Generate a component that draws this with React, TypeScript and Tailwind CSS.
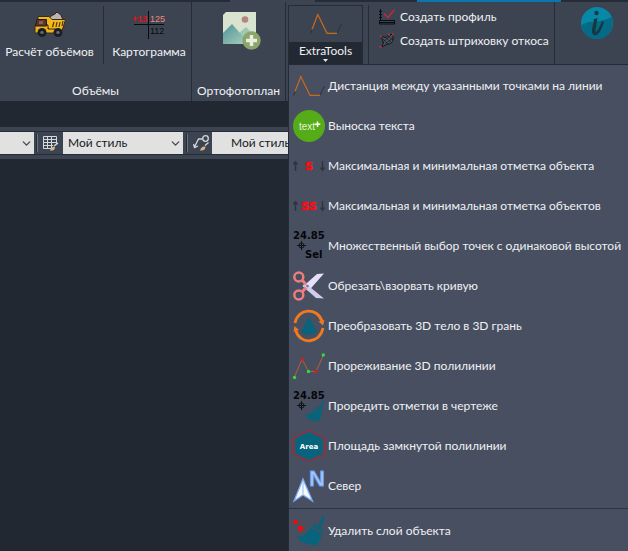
import React from "react";
import { ChevronDown } from "lucide-react";

interface MenuItem {
  label: string;
  icon: React.ReactNode;
}

function Icon({ children }: { children: React.ReactNode }) {
  return (
    <svg width="32" height="32" viewBox="0 0 32 32" fill="none" className="shrink-0 overflow-visible" aria-hidden="true">
      {children}
    </svg>
  );
}

function DistanceShape() {
  return (
    <>
      <path d="M0.5 25.5 L2.5 21 M27 25 L31.5 16" stroke="#2b3039" strokeWidth="1" />
      <path d="M2 21.5 L7.8 6.5 L17 25.3 H27" stroke="#c9681f" strokeWidth="1.2" />
    </>
  );
}

function Elevation() {
  return (
    <>
      <text x="0" y="9" fontSize="10" fontWeight="bold" fontFamily="DejaVu Sans, sans-serif" fill="#050608">
        24.85
      </text>
      <circle cx="8.5" cy="15.5" r="2.5" stroke="#111318" />
      <path d="M8.5 11 V20 M4 15.5 H13" stroke="#111318" />
    </>
  );
}

function Broom() {
  return (
    <>
      <path d="M29.5 1 L32 2.2 L28 12 L25 10.5 Z" fill="#08647d" />
      <path d="M20.5 9 L30 13.5 L29 16.5 L18.8 11.5 Z" fill="#08647d" />
      <path d="M17.5 12.800 L28.3 18 C28.5 23 26.5 28 22 31 L20.5 28.5 L19.5 31 L15.5 28 L13 29.5 L10.5 26.5 L8 27.5 L4.5 21 C10 22 14.5 19 17.5 12.8 Z" fill="#08647d" />
    </>
  );
}

function ExtremeArrows() {
  return (
    <>
      <path d="M2.5 21 V12 M0.5 14.5 L2.5 11.8 L4.5 14.5" stroke="#2f343d" strokeWidth="1.4" />
      <path d="M29.5 11 V20 M27.5 17.5 L29.5 20.2 L31.5 17.5" stroke="#2f343d" strokeWidth="1.4" />
    </>
  );
}

const items: MenuItem[] = [
  { label: "Дистанция между указанными точками на линии", icon: <Icon><DistanceShape /></Icon> },
  {
    label: "Выноска текста",
    icon: (
      <Icon>
        <circle cx="16" cy="16" r="16" fill="#55ab18" />
        <text x="6" y="20" fontSize="10" fontFamily="Liberation Sans, sans-serif" fill="#e4f6d5">text</text>
        <path d="M24.5 11.5 V17 M21.8 14.3 H27.3" stroke="#fff" strokeWidth="1.5" />
      </Icon>
    ),
  },
  {
    label: "Максимальная и минимальная отметка объекта",
    icon: (
      <Icon>
        <ExtremeArrows />
        <text x="16" y="20" fontSize="11" fontWeight="bold" fontFamily="DejaVu Sans, sans-serif" fill="#ff0a10" stroke="#ff0a10" strokeWidth="0.5" textAnchor="middle">S</text>
      </Icon>
    ),
  },
  {
    label: "Максимальная и минимальная отметка объектов",
    icon: (
      <Icon>
        <ExtremeArrows />
        <text x="16" y="20" fontSize="11" fontWeight="bold" fontFamily="DejaVu Sans, sans-serif" fill="#ff0a10" stroke="#ff0a10" strokeWidth="0.5" textAnchor="middle">SS</text>
      </Icon>
    ),
  },
  {
    label: "Множественный выбор точек с одинаковой высотой",
    icon: (
      <Icon>
        <Elevation />
        <text x="12" y="28" fontSize="10" fontWeight="bold" fontFamily="DejaVu Sans, sans-serif" fill="#050608">Sel</text>
      </Icon>
    ),
  },
  {
    label: "Обрезать\\взорвать кривую",
    icon: (
      <Icon>
        <path d="M31 3.5 L24 4 L10 16.5 L15.5 21 Z" fill="#e6e0fa" />
        <path d="M12 13 L31 28.5 L23 28 L9.5 16 Z" fill="#d3caef" />
        <path d="M9 10 L13 14.5 M9 22 L13 17.5" stroke="#ef7d7c" strokeWidth="3" />
        <circle cx="5.8" cy="7" r="4.5" stroke="#ef7d7c" strokeWidth="2.5" />
        <circle cx="5.8" cy="25" r="4.5" stroke="#ef7d7c" strokeWidth="2.5" />
        <circle cx="14.5" cy="16" r="1.3" fill="#7472a8" />
      </Icon>
    ),
  },
  {
    label: "Преобразовать 3D тело в 3D грань",
    icon: (
      <Icon>
        <path d="M16 7 L23.5 21 C22 26 10 26 8.5 21 Z" fill="#08647d" />
        <path d="M2 13 C5 -2 24 -3 29 11" stroke="#f07a1d" strokeWidth="2.8" />
        <path d="M30 18 C27 34 7 35 3 21" stroke="#f07a1d" strokeWidth="2.8" />
        <path d="M25.5 11.5 L31.5 10 L30 15.5 Z M0.5 22 L1.5 16 L6 20 Z" fill="#f07a1d" />
      </Icon>
    ),
  },
  {
    label: "Прореживание 3D полилинии",
    icon: (
      <Icon>
        <path d="M1.5 27 L9 9 L15.5 21.5 H23 L30.5 5" stroke="#b75e33" />
        <circle cx="1.5" cy="27.5" r="1.7" fill="#2fdc3d" />
        <circle cx="15.5" cy="21.5" r="1.7" fill="#2fdc3d" />
        <circle cx="30.3" cy="5" r="1.7" fill="#2fdc3d" />
        <circle cx="9" cy="9" r="1.7" fill="#d01f26" />
        <circle cx="23" cy="21.5" r="1.7" fill="#d01f26" />
      </Icon>
    ),
  },
  {
    label: "Проредить отметки в чертеже",
    icon: (
      <Icon>
        <Elevation />
        <g transform="translate(9 10) scale(0.7)"><Broom /></g>
      </Icon>
    ),
  },
  {
    label: "Площадь замкнутой полилинии",
    icon: (
      <Icon>
        <path d="M16 0.7 L31.5 8 V24 L16 31.3 L0.5 24 V8 Z" stroke="#b91f2b" />
        <path d="M16 2 L29.5 8.5 V23.5 L16 30 L2.5 23.5 V8.5 Z" fill="#08647d" />
        <text x="16" y="19" fontSize="7" fontWeight="bold" fontFamily="DejaVu Sans, sans-serif" fill="#fff" textAnchor="middle">Area</text>
      </Icon>
    ),
  },
  {
    label: "Север",
    icon: (
      <Icon>
        <path d="M10 9 L19.5 31 L10 25 L1 31 Z" fill="#f4f8ff" stroke="#7daaf0" strokeWidth="1.3" />
        <path d="M10 12 V24" stroke="#9dbcf0" />
        <text x="16" y="16" fontSize="22" fontWeight="bold" fontFamily="Liberation Sans, sans-serif" fill="#a5c6fa" stroke="#6f9ff0" strokeWidth="0.8">N</text>
      </Icon>
    ),
  },
];

const removeLayer: MenuItem = {
  label: "Удалить слой объекта",
  icon: (
    <Icon>
      <Broom />
      <circle cx="2.5" cy="7" r="2.3" fill="#f20a0a" />
      <circle cx="7.5" cy="13.5" r="2.7" fill="#f20a0a" />
      <circle cx="8.5" cy="7.5" r="0.9" fill="#b82027" />
    </Icon>
  ),
};

function MenuRow({ label, icon }: MenuItem) {
  return (
    <button role="menuitem" className="flex h-10 w-full items-center gap-[3px] pl-1 text-left whitespace-nowrap hover:bg-[#525c6f]">
      {icon}
      <span>{label}</span>
    </button>
  );
}

function ToolsMenu() {
  return (
    <div role="menu" className="absolute inset-x-0 top-16 z-10 border-t border-l border-[#252c37] bg-[#474f61] pt-px">
      {items.map((item) => (
        <MenuRow key={item.label} {...item} />
      ))}
      <hr className="my-[2px] border-[#2c333f]" />
      <MenuRow {...removeLayer} />
    </div>
  );
}

function TruckIcon() {
  return (
    <Icon>
      <path d="M14 10 L17 6 L21 4 L23 2 L27 5 L29 10 Z" fill="#bdb4af" stroke="#33251c" />
      <path d="M4 6.5 H15 L18 9.5 L31.5 9.5 L28 21 H15 L12 12 H4 Z" fill="#f2b91d" stroke="#3a2a14" />
      <path d="M20 12 L18.5 17 M23 12 L22 17 M26 12 L25 17 M29 11 L28 16" stroke="#473213" strokeWidth="1.2" />
      <path d="M1 15 H14 V19 H22 V23 H1 Z" fill="#eeb21c" stroke="#3a2a14" />
      <path d="M3 9.5 H12.5 V16 H1.5 Z" fill="#593530" stroke="#261a18" />
      <path d="M5 11 H9 V14 H5 Z" fill="#8c5b54" />
      <circle cx="8" cy="22.5" r="4.5" fill="#1c1f25" />
      <circle cx="8" cy="22.5" r="2.3" fill="#5f6872" stroke="#111318" />
      <circle cx="24" cy="22.5" r="4.5" fill="#1c1f25" />
      <circle cx="24" cy="22.5" r="2.3" fill="#5f6872" stroke="#111318" />
    </Icon>
  );
}

function CartogramIcon() {
  return (
    <Icon>
      <path d="M15.5 1 V29 M1 14.5 H31" stroke="#090b0e" />
      <g fontSize="9" fontFamily="Liberation Sans, sans-serif">
        <text x="-1" y="12" fill="#e01219" fontWeight="bold">+13</text>
        <text x="17" y="12" fill="#ee8879">125</text>
        <text x="17" y="24" fill="#090b0e">112</text>
      </g>
    </Icon>
  );
}

function PhotoIcon() {
  return (
    <svg width="40" height="40" viewBox="0 0 40 40" fill="none" aria-hidden="true">
      <defs>
        <linearGradient id="mountain" x1="0" y1="0" x2="1" y2="1">
          <stop offset="0" stopColor="#4f9498" />
          <stop offset="1" stopColor="#a9cfbd" />
        </linearGradient>
      </defs>
      <path d="M4 1 H34 V33 H1 V4 Z" fill="#d9e4d0" />
      <path d="M17 22 L24 16 L34 26 V33 H20 Z" fill="#9fc8b5" />
      <path d="M1 22 L10 13 L25 30 V33 H1 Z" fill="url(#mountain)" />
      <circle cx="23" cy="8.5" r="3.3" fill="#b78482" />
      <circle cx="29.5" cy="29.5" r="9.2" fill="#8ca56c" />
      <path d="M29.5 24 V35 M24 29.5 H35" stroke="#e9efdd" strokeWidth="3.5" />
    </svg>
  );
}

function ProfileIcon() {
  return (
    <svg width="16" height="16" viewBox="0 0 16 16" fill="none" className="shrink-0" aria-hidden="true">
      <path d="M1.5 0 V11 M0 2.5 H3 M0 5.5 H3 M0 8.5 H3" stroke="#090b0e" />
      <path d="M0.5 11.5 H15.5 V15 H0.5 Z M1 13.5 H15" stroke="#090b0e" />
      <path d="M5 4.5 L9 8.5 L15.5 0.5" stroke="#cf2733" strokeWidth="1.2" />
    </svg>
  );
}

function HatchIcon() {
  return (
    <svg width="16" height="16" viewBox="0 0 16 16" fill="none" className="shrink-0" aria-hidden="true">
      <path d="M2 3.5 L7 4.5 L10 1.5 H14 V6 C14 10 11 11 7.5 11.5 L2 14.5 L4.5 10 Z" fill="#4c515b" stroke="#11141a" />
      <path d="M4 6 L9 11 M7 5 L12 9 M9 3 L14 7 M4 9 L12 2 M6 11 L14 5" stroke="#1d2128" strokeWidth="0.8" />
      <path d="M0.5 14 H3 M1 3.5 H3 M9 1.5 H11 M13 1.5 H15" stroke="#c2323b" strokeWidth="1.5" />
    </svg>
  );
}

function InfoIcon() {
  return (
    <Icon>
      <circle cx="16" cy="16" r="16" fill="#0688a6" />
      <path d="M0.5 18 C10 12 18 17 31 10 C34 24 26 32 16 32 C8 32 2 27 0.5 18 Z" fill="#046a86" />
      <circle cx="15.5" cy="6" r="2.2" fill="#183841" />
      <path d="M12 12.5 L16.5 11 L14.5 23 C14.3 26 16 26.5 21 14 L23 15 C19 27 16 29 13 28 C9 26 12 19 13 13 Z" fill="#183841" />
    </Icon>
  );
}

function TableStyleIcon() {
  return (
    <svg width="16" height="16" viewBox="0 0 16 16" fill="none" className="shrink-0" aria-hidden="true">
      <path d="M0.5 1.5 H13.5 V9 M0.5 1.5 V13.5 H8 M0.5 4.5 H13.5 M0.5 7.5 H13 M0.5 10.5 H10 M4.5 2 V13 M8.5 2 V13" stroke="#d5d8dc" />
      <path d="M11 11 L15 8" stroke="#d5d8dc" strokeWidth="1.5" />
      <path d="M7 15.5 C8 12 10 11 12 12 C12 15 10 16 7 15.5 Z" fill="#d8b586" />
    </svg>
  );
}

function LeaderStyleIcon() {
  return (
    <svg width="17" height="16" viewBox="0 0 17 16" fill="none" className="shrink-0" aria-hidden="true">
      <circle cx="12.5" cy="3.5" r="2.8" stroke="#d5d8dc" strokeWidth="1.3" />
      <path d="M9.5 4 H5.5 L1.5 12 M0.5 9 L1.5 12.5 L5 11 M12 10.5 L15.5 7.5" stroke="#d5d8dc" strokeWidth="1.3" />
      <path d="M7 15.5 C8 12 10 11 12.5 11.5 C12.5 14.5 10.5 16 7 15.5 Z" fill="#d8b586" />
    </svg>
  );
}

function StyleSelect({ name, value, className }: { name: string; value: string; className: string }) {
  return (
    <div className={`relative h-[22px] shrink-0 bg-[#e1e1e1] text-[#15181c] ${className}`}>
      <select aria-label={name} defaultValue={value} className="h-full w-full appearance-none outline-none">
        <option value={value}>{value}</option>
      </select>
      <ChevronDown size={13} strokeWidth={2.5} className="pointer-events-none absolute top-[5px] right-[1px] text-[#454b52]" />
    </div>
  );
}

function Ribbon() {
  return (
    <header className="relative flex h-[101px] bg-[#3c4452]">
      <div className="flex w-[288px] shrink-0 border-t-2 border-[#252c37]">
        <section className="flex w-48 flex-col border-r border-[#252c37] pt-1">
          <div className="flex h-[58px]">
            <button className="flex w-26 flex-col items-center border-r border-[#252c37] pt-1 pr-1">
              <TruckIcon />
              <span className="pt-[2px] leading-4 whitespace-nowrap">Расчёт объёмов</span>
            </button>
            <button className="flex flex-1 flex-col items-center pt-1 pl-[3px]">
              <CartogramIcon />
              <span className="pt-[2px] leading-4 whitespace-nowrap">Картограмма</span>
            </button>
          </div>
          <h2 className="mt-[19px] text-center leading-4">Объёмы</h2>
        </section>
        <section className="mr-[2px] flex flex-1 flex-col items-center border-r border-[#252c37] pt-[9px]">
          <button aria-label="Ортофотоплан" className="pl-[7px]"><PhotoIcon /></button>
          <h2 className="mt-auto mb-[2px] leading-4 whitespace-nowrap">Ортофотоплан</h2>
        </section>
      </div>
      <div className="relative flex min-w-0 flex-1 border-t-2 border-[#252c37]">
        <button className="mt-[3px] flex h-[60px] w-[75px] shrink-0 flex-col items-center border border-[#252c37]">
          <span className="flex h-9 items-center"><Icon><DistanceShape /></Icon></span>
          <span className="flex w-full flex-1 flex-col items-center bg-[#222933] pt-px leading-4">
            ExtraTools
            <svg width="5" height="3" viewBox="0 0 5 3" aria-hidden="true"><path d="M0 0 H5 L2.5 3 Z" fill="#e6e8eb" /></svg>
          </span>
        </button>
        <div className="mt-[3px] ml-[5px] flex w-[186px] shrink-0 flex-col border-l border-[#252c37] pl-[10px]">
          <button className="flex h-6 items-center gap-[5px] whitespace-nowrap"><ProfileIcon />Создать профиль</button>
          <button className="flex h-6 items-center gap-[5px] whitespace-nowrap"><HatchIcon />Создать штриховку откоса</button>
        </div>
        <div className="flex flex-1 items-start border-l border-[#252c37] pt-[5px] pl-[26px]">
          <button aria-label="i"><InfoIcon /></button>
        </div>
      </div>
      {/* active tab edges that overlap the ribbon's top line */}
      <div className="absolute top-0 left-[230px] h-[2px] w-[85px] bg-[#3c4452]" />
      <div className="absolute top-0 left-[417px] h-[2px] w-36 bg-[#0b75ad]" />
      <div className="absolute inset-y-0 right-0 left-[288px]">
        <ToolsMenu />
      </div>
    </header>
  );
}

function StyleToolbar() {
  return (
    <div className="mt-[26px] flex border-y-4 border-[#3c4452] bg-[#3c4452]">
      <div className="flex w-full items-center overflow-hidden border-y border-[#252c37]">
        <StyleSelect name="Стиль" value="" className="w-[34px]" />
        <span className="mr-[5px] ml-[2px] h-[18px] w-[2px] shrink-0 border-l border-[#252c37] bg-[#68707c]" />
        <TableStyleIcon />
        <StyleSelect name="Стиль таблиц" value="Мой стиль" className="ml-1 w-30 pl-[5px]" />
        <span className="mr-[5px] ml-[3px] h-[18px] w-[2px] shrink-0 border-l border-[#252c37] bg-[#68707c]" />
        <LeaderStyleIcon />
        <StyleSelect name="Стиль выносок" value="Мой стиль" className="ml-[2px] w-36 pl-[19px]" />
      </div>
    </div>
  );
}

export default function App() {
  return (
    <div className="min-h-screen bg-[#222831] font-['Lato','Open_Sans',sans-serif] text-[12px] text-[#f0f1f3]">
      <Ribbon />
      <StyleToolbar />
    </div>
  );
}
